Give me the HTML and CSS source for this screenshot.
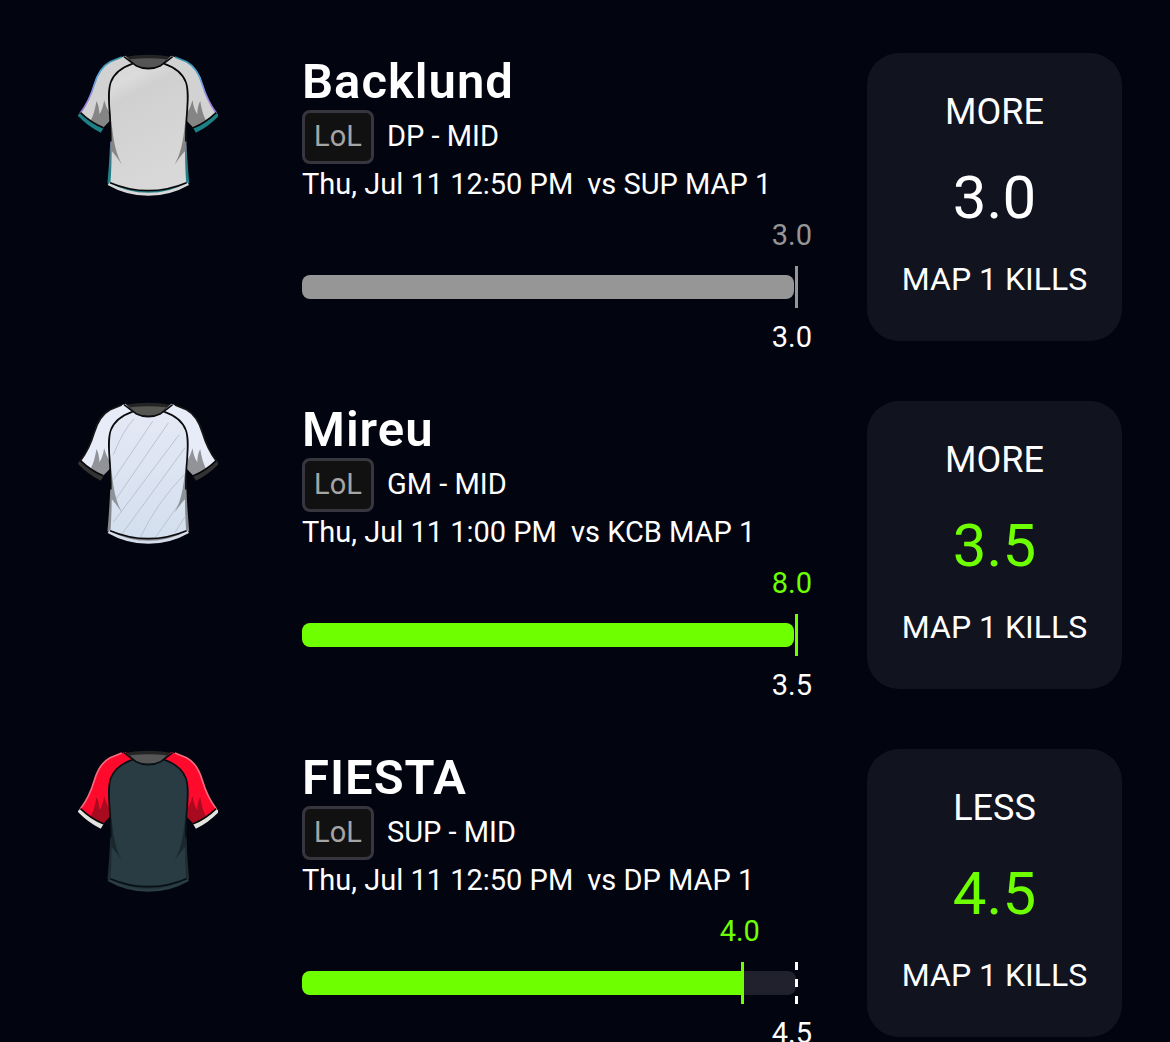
FILE: index.html
```html
<!DOCTYPE html>
<html lang="en">
<head>
<meta charset="utf-8">
<meta name="viewport" content="width=device-width, initial-scale=1">
<title>Picks</title>
<link rel="stylesheet" href="styles.css">
</head>
<body>
<svg class="defs" aria-hidden="true">
  <defs>
    <linearGradient id="edge" x1="0" y1="0" x2="0" y2="1">
      <stop offset="0" stop-color="#2f8fa6"/><stop offset=".35" stop-color="#5aa5dc"/><stop offset=".8" stop-color="#a184dc"/><stop offset="1" stop-color="#8a6fc4"/>
    </linearGradient>
    <linearGradient id="side" x1="0" y1="0" x2="0" y2="1">
      <stop offset="0" stop-color="#8a8a8c"/><stop offset=".45" stop-color="#77778c"/><stop offset=".75" stop-color="#258088"/><stop offset="1" stop-color="#1d8086"/>
    </linearGradient>
    <linearGradient id="silver" x1="0" y1="0" x2=".3" y2="1">
      <stop offset="0" stop-color="#d6d6d6"/><stop offset=".22" stop-color="#dbdbdb"/><stop offset=".34" stop-color="#d0d0d1"/><stop offset="1" stop-color="#d8d8d9"/>
    </linearGradient>
    <linearGradient id="ice" x1="0" y1="0" x2="0" y2="1">
      <stop offset="0" stop-color="#e6e9f6"/><stop offset="1" stop-color="#d3dfee"/>
    </linearGradient>
    <symbol id="jersey" viewBox="24 24 420 430">
      <path class="collar-back" d="M164 36Q235 22 306 36L286 60H184Z"/>
      <path class="collar-inner" d="M180 43Q235 36 290 43L266 68H204Z"/>
      <path class="sleeve" d="M166 32L120 50Q86 68 71 120Q58 168 30 206L96 250L118 228L132 100L190 56Z"/>
      <path class="sleeve" d="M304 32L350 50Q384 68 399 120Q412 168 440 206L374 250L352 228L338 100L280 56Z"/>
      <path class="sleeve-shade" d="M62 227Q74 202 79 168Q87 183 88 208Q99 191 102 166Q108 188 118 204V229L96 252Z"/>
      <path class="sleeve-shade" d="M408 227Q396 202 391 168Q383 183 382 208Q371 191 368 166Q362 188 352 204V229L374 252Z"/>
      <path class="sleeve-edge" d="M155 36L120 50Q87 68 72 120Q58 168 30 205M315 36L350 50Q383 68 398 120Q412 168 440 205"/>
      <path class="cuff" d="M30 204Q60 234 100 250L92 264Q52 244 22 212ZM440 204Q410 234 370 250L378 264Q418 244 448 212Z"/>
      <path class="cuff-line" d="M31 203Q62 233 100 249M439 203Q408 233 370 249"/>
      <path class="side" d="M116 150Q128 240 112 415Q170 446 235 446Q300 446 358 415Q342 240 354 150Z"/>
      <path class="torso" d="M166 34L190 56Q211 72 235 72Q259 72 280 56L304 34L284 56Q332 73 347 114C360 154 342 215 345 290Q345 370 349 414Q293 440 235 440Q177 440 121 414Q125 370 125 290C128 215 110 154 123 114Q138 73 186 56Z"/>
      <path class="stripes" d="M130 185Q160 110 192 78M130 260L248 85M130 330L295 90M130 388L328 125M155 425L345 165M210 436Q260 330 343 245M255 436L344 310M315 420L345 372"/>
      <path class="fold" d="M125 238C131 295 138 326 156 360Q137 332 122 316ZM345 238C339 295 332 326 314 360Q333 332 348 316Z"/>
      <path class="seam" d="M188 56Q136 74 122 112C108 152 124 213 122 290M282 56Q334 74 348 112C362 152 346 213 348 290"/>
      <path class="neck" d="M162 35Q182 51 198 62Q235 80 272 62Q288 51 308 35"/>
      <path class="hem-band" d="M115 417Q171 449 235 449Q299 449 355 417"/>
      <path class="hem" d="M120 414Q177 438 235 438Q293 438 350 414"/>
    </symbol>
  </defs>
</svg>

<main class="picks">
  <article class="pick pick-push">
    <svg class="jersey jersey-silver" role="img" aria-label="DP jersey"><use href="#jersey"/></svg>
    <div class="info">
      <h2 class="name">Backlund</h2>
      <div class="team"><span class="league">LoL</span><span>DP - MID</span></div>
      <p class="match"><time>Thu, Jul 11 12:50 PM</time><span>vs SUP MAP 1</span></p>
      <div class="progress" style="--at: 100%">
        <div class="score">3.0</div>
        <div class="meter"><div class="track"><div class="fill"></div></div><div class="marker"></div></div>
        <div class="target">3.0</div>
      </div>
    </div>
    <section class="line"><h3 class="side-label">MORE</h3><p class="number">3.0</p><p class="stat">MAP 1 KILLS</p></section>
  </article>

  <article class="pick pick-won">
    <svg class="jersey jersey-ice" role="img" aria-label="GM jersey"><use href="#jersey"/></svg>
    <div class="info">
      <h2 class="name">Mireu</h2>
      <div class="team"><span class="league">LoL</span><span>GM - MID</span></div>
      <p class="match"><time>Thu, Jul 11 1:00 PM</time><span>vs KCB MAP 1</span></p>
      <div class="progress" style="--at: 100%">
        <div class="score">8.0</div>
        <div class="meter"><div class="track"><div class="fill"></div></div><div class="marker"></div></div>
        <div class="target">3.5</div>
      </div>
    </div>
    <section class="line"><h3 class="side-label">MORE</h3><p class="number">3.5</p><p class="stat">MAP 1 KILLS</p></section>
  </article>

  <article class="pick pick-won pick-under">
    <svg class="jersey jersey-red" role="img" aria-label="SUP jersey"><use href="#jersey"/></svg>
    <div class="info">
      <h2 class="name">FIESTA</h2>
      <div class="team"><span class="league">LoL</span><span>SUP - MID</span></div>
      <p class="match"><time>Thu, Jul 11 12:50 PM</time><span>vs DP MAP 1</span></p>
      <div class="progress" style="--at: 89%">
        <div class="score">4.0</div>
        <div class="meter"><div class="track"><div class="fill"></div></div><div class="marker"></div><div class="goal"></div></div>
        <div class="target">4.5</div>
      </div>
    </div>
    <section class="line"><h3 class="side-label">LESS</h3><p class="number">4.5</p><p class="stat">MAP 1 KILLS</p></section>
  </article>
</main>
</body>
</html>
```
FILE: styles.css
```css
* { box-sizing: border-box; }

body {
  margin: 0;
  background: #020410;
  color: #fff;
  font: 400 29px/40px Roboto, "Liberation Sans", sans-serif;
}

h2, h3, p { margin: 0; }

.defs { position: absolute; width: 0; height: 0; }

.picks {
  display: flex;
  flex-direction: column;
  gap: 44px;
  height: 100vh;
  padding: 53px 48px 0 78px;
  overflow-y: auto;
  scrollbar-width: none;
}

.pick {
  --tone: #969696;
  --result: #fff;
  display: grid;
  flex-shrink: 0;
  grid-template-columns: 224px minmax(0, 1fr) 255px;
  align-items: start;
}
.pick-won { --tone: #6eff00; --result: #6eff00; }

.info { padding-right: 55px; }
.name { font-size: 49px; line-height: 57px; font-weight: 600; letter-spacing: 1px; }

.team { display: flex; gap: 13px; }
.team > span { line-height: 52px; }
.team .league {
  width: 72px;
  height: 54px;
  border: 3px solid #37363f;
  border-radius: 8px;
  background: #111;
  color: #a5a5a5;
  line-height: 46px;
  text-align: center;
}
.match { display: flex; gap: 14px; white-space: nowrap; }

.progress { margin-top: 11px; }
.score { width: var(--at); color: var(--tone); text-align: right; }
.pick-under .score { width: calc(var(--at) + 4px); }
.target { text-align: right; }

.meter {
  position: relative;
  display: flex;
  align-items: center;
  height: 42px;
  margin: 11px 16px 9px 0;
}
.track { flex: 1; height: 24px; margin-right: 2px; border-radius: 8px; overflow: hidden; }
.pick-under .track { margin-right: 0; background: #20212c; }
.fill { width: var(--at); height: 100%; background: var(--tone); }
.marker {
  position: absolute;
  left: calc(var(--at) - 1px);
  width: 3px;
  height: 42px;
  background: var(--tone);
}
.goal {
  position: absolute;
  left: calc(100% - 1px);
  width: 3px;
  height: 42px;
  background: repeating-linear-gradient(#fff 0 8px, transparent 8px 17px);
}

.line {
  display: flex;
  flex-direction: column;
  align-items: center;
  gap: 26px;
  min-height: 288px;
  padding: 39px 0;
  border-radius: 32px;
  background: #11131f;
}
.side-label { font-size: 36px; line-height: 40px; font-weight: 400; }
.number { color: var(--result); font-size: 60px; line-height: 80px; }
.stat { font-size: 32px; line-height: 30px; }

/* Jerseys share one drawing and are recoloured through these variables. */
.jersey { width: 140px; height: 143px; overflow: visible; }
.jersey-silver { --cloth: url(#silver); --sleeve: #d2d2d3; --shade: #858586; --fold: #858586; --cuff: #1d8086; --edge: url(#edge); --side: url(#side); --band: #d8d8d9; --stripe: none; --collar: #555556; --line: #08080a; }
.jersey-ice { --cloth: url(#ice); --sleeve: #e8ebf8; --shade: #919398; --fold: #8e9299; --cuff: #323232; --edge: #161616; --side: #85878d; --band: #d5ddea; --stripe: #bcc2cf; --collar: #555551; --line: #0b0b0e; }
.jersey-red { --cloth: #293c44; --sleeve: #ff0a2c; --shade: #a80a20; --fold: #1a282d; --cuff: #e4e4df; --edge: #f36c7e; --side: #1e2c32; --band: #2b3d44; --stripe: none; --collar: #565656; --line: #071014; }

.collar-back { fill: #242424; }
.collar-inner { fill: var(--collar); }
.sleeve { fill: var(--sleeve); }
.sleeve-shade { fill: var(--shade); }
.sleeve-edge { fill: none; stroke: var(--edge); stroke-width: 5; }
.cuff-line { fill: none; stroke: #08080a; stroke-width: 5; }
.cuff { fill: var(--cuff); }
.side { fill: var(--side); }
.torso { fill: var(--cloth); }
.stripes { fill: none; stroke: var(--stripe); stroke-width: 3; }
.fold { fill: var(--fold); }
.seam { fill: none; stroke: var(--line); stroke-width: 5; }
.neck { fill: none; stroke: var(--line); stroke-width: 5; }
.hem-band { fill: none; stroke: var(--band); stroke-width: 9; }
.hem { fill: none; stroke: var(--line); stroke-width: 5; }
```
